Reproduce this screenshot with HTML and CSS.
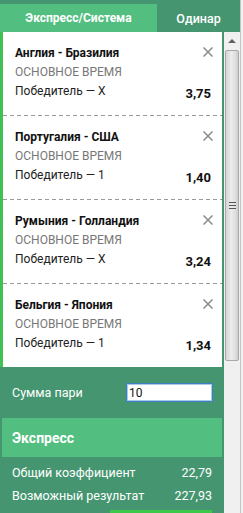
FILE: index.html
```html
<!DOCTYPE html>
<html lang="ru">
<head>
    <meta charset="UTF-8">
    <meta name="viewport" content="width=device-width, initial-scale=1.0">
    <title>Купон</title>
    <link rel="stylesheet" href="styles.css">
</head>
<body>
    <div class="widget">
        <div class="main">
            <div class="tabs">
                <div class="tab active">Экспресс/Система</div>
                <div class="tab">Одинар</div>
            </div>

            <div class="body">
                <div class="content">
                    <div class="slip">
                        <div class="bet">
                            <div class="bet-title">Англия - Бразилия</div>
                            <div class="bet-period">ОСНОВНОЕ ВРЕМЯ</div>
                            <div class="bet-line">
                                <span>Победитель — Х</span>
                                <span class="bet-odds">3,75</span>
                            </div>
                            <svg class="bet-close" width="10" height="10" viewBox="0 0 10 10"><path d="M0.5 0.5L9.5 9.5M9.5 0.5L0.5 9.5"/></svg>
                        </div>
                        <div class="bet">
                            <div class="bet-title">Португалия - США</div>
                            <div class="bet-period">ОСНОВНОЕ ВРЕМЯ</div>
                            <div class="bet-line">
                                <span>Победитель — 1</span>
                                <span class="bet-odds">1,40</span>
                            </div>
                            <svg class="bet-close" width="10" height="10" viewBox="0 0 10 10"><path d="M0.5 0.5L9.5 9.5M9.5 0.5L0.5 9.5"/></svg>
                        </div>
                        <div class="bet">
                            <div class="bet-title">Румыния - Голландия</div>
                            <div class="bet-period">ОСНОВНОЕ ВРЕМЯ</div>
                            <div class="bet-line">
                                <span>Победитель — Х</span>
                                <span class="bet-odds">3,24</span>
                            </div>
                            <svg class="bet-close" width="10" height="10" viewBox="0 0 10 10"><path d="M0.5 0.5L9.5 9.5M9.5 0.5L0.5 9.5"/></svg>
                        </div>
                        <div class="bet">
                            <div class="bet-title">Бельгия - Япония</div>
                            <div class="bet-period">ОСНОВНОЕ ВРЕМЯ</div>
                            <div class="bet-line">
                                <span>Победитель — 1</span>
                                <span class="bet-odds">1,34</span>
                            </div>
                            <svg class="bet-close" width="10" height="10" viewBox="0 0 10 10"><path d="M0.5 0.5L9.5 9.5M9.5 0.5L0.5 9.5"/></svg>
                        </div>
                    </div>

                    <div class="stake">
                        <label for="stake-input">Сумма пари</label>
                        <input type="text" id="stake-input" value="10">
                    </div>

                    <div class="summary">
                        <div class="summary-title">Экспресс</div>
                        <div class="summary-rows">
                            <div class="summary-row">
                                <span>Общий коэффициент</span>
                                <span>22,79</span>
                            </div>
                            <div class="summary-row">
                                <span>Возможный результат</span>
                                <span>227,93</span>
                            </div>
                            <div class="summary-action">
                                <button class="place-btn" aria-label="Заключить пари"></button>
                            </div>
                        </div>
                    </div>
                </div>

                <div class="scrollbar">
                    <div class="scroll-up"><span class="arrow-up"></span></div>
                    <div class="scroll-thumb">
                        <span class="grip"></span>
                    </div>
                </div>
            </div>
        </div>
        <div class="edge"></div>
    </div>
</body>
</html>
```

FILE: styles.css
```css
body {
    margin: 0;
    font-family: Roboto, 'Liberation Sans', Arial, sans-serif;
    font-size: 12px;
    background: #f0f0f0;
    overflow: hidden;
}

.widget {
    display: flex;
    height: 513px;
    overflow: hidden;
}

.main {
    width: 240px;
    display: flex;
    flex-direction: column;
}

.edge {
    width: 2px;
    border-left: 1px solid #c4c4c4;
    background: #f0f0f0;
}

/* tabs */
.tabs {
    display: flex;
    flex-shrink: 0;
    height: 28px;
    padding-top: 4px;
    background: #459670;
}

.tab {
    flex: 1;
    display: flex;
    align-items: center;
    justify-content: center;
    color: #fff;
    font-size: 12.5px;
    font-weight: 500;
    background: #459670;
}

.tab.active {
    flex: none;
    width: 157px;
    background: #52be80;
    font-weight: bold;
    font-size: 12px;
}

.body {
    display: flex;
    flex: 1;
    min-height: 0;
}

.content {
    width: 224px;
    background: #459670;
    display: flex;
    flex-direction: column;
}

.content > * {
    flex-shrink: 0;
}

/* bet slip */
.slip {
    background: #fff;
    border-left: 3px solid #41c155;
    margin-right: 2px;
}

.bet {
    position: relative;
    padding: 12px 11px 14px 12px;
    line-height: 19px;
}

.bet + .bet::before {
    content: '';
    position: absolute;
    top: -1px;
    left: 0;
    right: 0;
    height: 1px;
    background: repeating-linear-gradient(to right, #9a9a9a 0 4px, transparent 4px 7px);
}

.bet + .bet {
    margin-top: 1px;
}

.bet-title {
    font-weight: bold;
    color: #111;
}

.bet-period {
    color: #777;
}

.bet-line {
    display: flex;
    justify-content: space-between;
    color: #222;
}

.bet-odds {
    font-weight: bold;
    font-size: 13px;
    color: #111;
    position: relative;
    top: 2px;
}

.bet-close {
    position: absolute;
    top: 15px;
    right: 9px;
}

.bet-close path {
    stroke: #8a8a8a;
    stroke-width: 1.5;
    fill: none;
}

/* stake */
.stake {
    height: 51px;
    display: flex;
    align-items: center;
    justify-content: space-between;
    padding: 0 11px 0 12px;
    color: #fff;
    font-size: 12.5px;
}

.stake input {
    width: 81px;
    height: 15px;
    padding: 1px 2px;
    border: 1px solid #3b7fc4;
    box-shadow: inset 0 0 0 1px #a9c9e8;
    font-family: Roboto, 'Liberation Sans', Arial, sans-serif;
    font-size: 12px;
    color: #111;
    outline: none;
}

/* summary */
.summary {
    margin: 0 2px;
}

.summary-title {
    height: 39px;
    display: flex;
    align-items: center;
    padding-left: 10px;
    background: #52be80;
    color: #fff;
    font-weight: bold;
    font-size: 14px;
}

.summary-rows {
    padding: 4px 10px 0;
    color: #fff;
    font-size: 12.5px;
}

.summary-row {
    display: flex;
    justify-content: space-between;
    line-height: 23px;
}

.summary-action {
    display: flex;
    justify-content: flex-end;
    margin-top: 3px;
}

.place-btn {
    width: 102px;
    height: 24px;
    border: none;
    background: #3cc84a;
}

/* fake scrollbar */
.scrollbar {
    width: 16px;
    background: #f0f0f0;
    display: flex;
    flex-direction: column;
}

.scroll-up {
    height: 18px;
    display: flex;
    align-items: center;
    justify-content: center;
}

.arrow-up {
    width: 0;
    height: 0;
    border-left: 4px solid transparent;
    border-right: 4px solid transparent;
    border-bottom: 4px solid #606060;
}

.scroll-thumb {
    flex-shrink: 0;
    height: 309px;
    margin: 0 1px;
    border: 1px solid #a8a8a8;
    border-radius: 2px;
    background: linear-gradient(to right, #d6d6d6, #ececec 45%, #e2e2e2 70%, #cfcfcf);
    display: flex;
    align-items: center;
    justify-content: center;
}

.grip {
    width: 7px;
    height: 7px;
    background: repeating-linear-gradient(to bottom, #555 0 1px, transparent 1px 3px);
}
```
